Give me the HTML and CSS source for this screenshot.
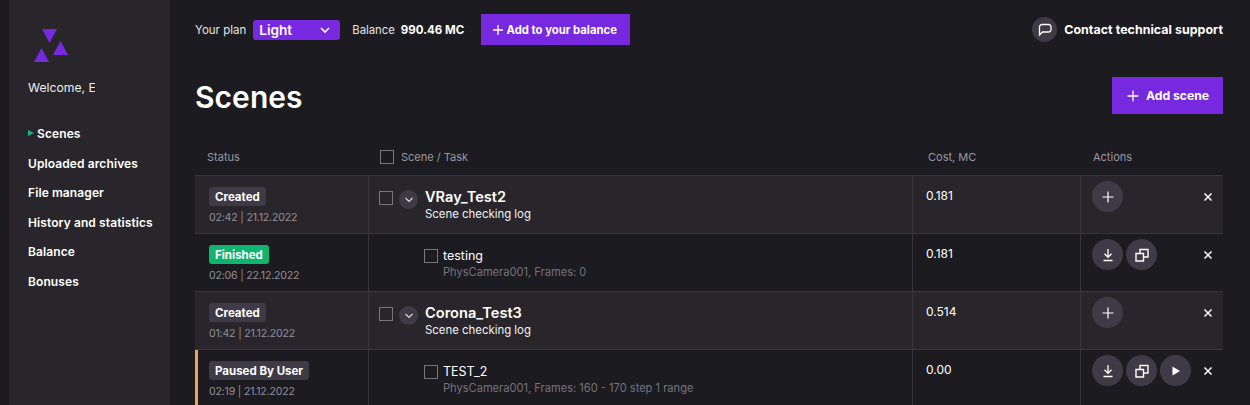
FILE: index.html
```html
<!DOCTYPE html>
<html lang="en">
<head>
<meta charset="utf-8">
<title>Scenes</title>
<link rel="stylesheet" href="styles.css">
</head>
<body>
<div class="app">
  <aside class="sidebar">
    <svg class="logo" width="46" height="34" viewBox="0 0 46 34"><path d="M14 0h15l-7.500 14zM25 26l7.500-14 7.500 14zM6 33l7.500-14 7.500 14z" fill="#7629df"/></svg>
    <div class="welcome">Welcome, E</div>
    <nav class="nav">
      <a class="nav-item active"><span class="nav-mark"></span>Scenes</a>
      <a class="nav-item">Uploaded archives</a>
      <a class="nav-item">File manager</a>
      <a class="nav-item">History and statistics</a>
      <a class="nav-item">Balance</a>
      <a class="nav-item">Bonuses</a>
    </nav>
  </aside>
  <main class="main">
    <header class="topbar">
      <span class="plan-label">Your plan</span>
      <div class="plan-select">Light
        <svg width="12" height="8" viewBox="0 0 12 8"><path d="M2 2l4 4 4-4" fill="none" stroke="#fff" stroke-width="1.600"/></svg>
      </div>
      <span class="balance-label">Balance</span>
      <strong class="balance-value">990.46 MC</strong>
      <button class="add-balance"><svg width="12" height="12" viewBox="0 0 12 12"><path d="M6 1v10M1 6h10" stroke="#fff" stroke-width="1.300"/></svg>Add to your balance</button>
      <div class="support">
        <span class="support-icon"><svg width="14" height="14" viewBox="0 0 14 14"><path d="M4 1.500h6.500a2.500 2.500 0 0 1 2.500 2.500v2.500a2.500 2.500 0 0 1-2.500 2.500H4.500L1.500 12V4A2.500 2.500 0 0 1 4 1.500z" fill="none" stroke="#fff" stroke-width="1.300"/></svg></span>
        <span class="support-text">Contact technical support</span>
      </div>
    </header>
    <div class="title-row">
      <h1>Scenes</h1>
      <button class="add-scene"><svg width="14" height="14" viewBox="0 0 14 14"><path d="M7 1.500v11M1.500 7h11" stroke="#fff" stroke-width="1.300"/></svg>Add scene</button>
    </div>
    <section class="table">
      <div class="row head">
        <div class="cell c-status">Status</div>
        <div class="cell c-scene"><span class="check"></span>Scene / Task</div>
        <div class="cell c-cost">Cost, MC</div>
        <div class="cell c-actions">Actions</div>
      </div>

      <div class="row scene">
        <div class="cell c-status"><span class="badge">Created</span><span class="date">02:42 | 21.12.2022</span></div>
        <div class="cell c-scene">
          <span class="check"></span>
          <span class="toggle"><svg width="10" height="8" viewBox="0 0 10 8"><path d="M1.500 2l3.500 3.500L8.500 2" fill="none" stroke="#fff" stroke-opacity=".8" stroke-width="1.200"/></svg></span>
          <div class="name-block"><div class="scene-name">VRay_Test2</div><div class="scene-sub">Scene checking log</div></div>
        </div>
        <div class="cell c-cost"><span class="cost">0.181</span></div>
        <div class="cell c-actions">
          <button class="round"><svg width="14" height="14" viewBox="0 0 14 14"><path d="M7 1.500v11M1.500 7h11" stroke="#fff" stroke-width="1.200"/></svg></button>
          <svg class="close" width="10" height="10" viewBox="0 0 10 10"><path d="M1.500 1.500l7 7M8.500 1.500l-7 7" stroke="#fff" stroke-width="1.500"/></svg>
        </div>
      </div>

      <div class="row task">
        <div class="cell c-status"><span class="badge green">Finished</span><span class="date">02:06 | 22.12.2022</span></div>
        <div class="cell c-scene task-cell">
          <span class="check"></span>
          <div class="name-block"><div class="task-name">testing</div><div class="task-sub">PhysCamera001, Frames: 0</div></div>
        </div>
        <div class="cell c-cost"><span class="cost">0.181</span></div>
        <div class="cell c-actions">
          <button class="round"><svg width="14" height="14" viewBox="0 0 14 14"><path d="M7 1v8M3.500 5.800L7 9.300l3.500-3.500M2.500 12.500h9" fill="none" stroke="#fff" stroke-width="1.300"/></svg></button>
          <button class="round"><svg width="14" height="14" viewBox="0 0 14 14"><path d="M1 5.500h7.500V13H1zM5 5V1.500h8v7.500H9" fill="none" stroke="#fff" stroke-width="1.400"/></svg></button>
          <svg class="close" width="10" height="10" viewBox="0 0 10 10"><path d="M1.500 1.500l7 7M8.500 1.500l-7 7" stroke="#fff" stroke-width="1.500"/></svg>
        </div>
      </div>

      <div class="row scene">
        <div class="cell c-status"><span class="badge">Created</span><span class="date">01:42 | 21.12.2022</span></div>
        <div class="cell c-scene">
          <span class="check"></span>
          <span class="toggle"><svg width="10" height="8" viewBox="0 0 10 8"><path d="M1.500 2l3.500 3.500L8.500 2" fill="none" stroke="#fff" stroke-opacity=".8" stroke-width="1.200"/></svg></span>
          <div class="name-block"><div class="scene-name">Corona_Test3</div><div class="scene-sub">Scene checking log</div></div>
        </div>
        <div class="cell c-cost"><span class="cost">0.514</span></div>
        <div class="cell c-actions">
          <button class="round"><svg width="14" height="14" viewBox="0 0 14 14"><path d="M7 1.500v11M1.500 7h11" stroke="#fff" stroke-width="1.200"/></svg></button>
          <svg class="close" width="10" height="10" viewBox="0 0 10 10"><path d="M1.500 1.500l7 7M8.500 1.500l-7 7" stroke="#fff" stroke-width="1.500"/></svg>
        </div>
      </div>

      <div class="row task paused">
        <div class="cell c-status"><span class="badge">Paused By User</span><span class="date">02:19 | 21.12.2022</span></div>
        <div class="cell c-scene task-cell">
          <span class="check"></span>
          <div class="name-block"><div class="task-name">TEST_2</div><div class="task-sub">PhysCamera001, Frames: 160 - 170 step 1 range</div></div>
        </div>
        <div class="cell c-cost"><span class="cost">0.00</span></div>
        <div class="cell c-actions">
          <button class="round"><svg width="14" height="14" viewBox="0 0 14 14"><path d="M7 1v8M3.500 5.800L7 9.300l3.500-3.500M2.500 12.500h9" fill="none" stroke="#fff" stroke-width="1.300"/></svg></button>
          <button class="round"><svg width="14" height="14" viewBox="0 0 14 14"><path d="M1 5.500h7.500V13H1zM5 5V1.500h8v7.500H9" fill="none" stroke="#fff" stroke-width="1.400"/></svg></button>
          <button class="round"><svg width="10" height="10" viewBox="0 0 10 10"><path d="M1.500 .5l7.500 4.500-7.500 4.500z" fill="#fff"/></svg></button>
          <svg class="close" width="10" height="10" viewBox="0 0 10 10"><path d="M1.500 1.500l7 7M8.500 1.500l-7 7" stroke="#fff" stroke-width="1.500"/></svg>
        </div>
      </div>
    </section>
  </main>
</div>
</body>
</html>
```
FILE: styles.css
```css
* { box-sizing: border-box; }
html, body { margin: 0; height: 405px; overflow: hidden; }
body {
  background: #1c1b20;
  color: #fff;
  font-family: Inter, "Noto Sans", "Liberation Sans", sans-serif;
  font-size: 12px;
}
.app { display: flex; height: 405px; padding-left: 9px; }
.sidebar {
  width: 161px;
  flex: none;
  background: #28262b;
  padding: 29px 0 0 19px;
}
.logo { display: block; }
.welcome { margin-top: 17px; font-size: 12.2px; line-height: 16px; color: #eee; width: 67px; white-space: nowrap; overflow: hidden; }
.nav { display: flex; flex-direction: column; margin-top: 22.8px; }
.nav-item { display: flex; align-items: center; height: 29.5px; font-size: 12px; font-weight: 600; white-space: nowrap; letter-spacing: .1px; }
.nav-mark { width: 0; height: 0; border-left: 6px solid #1bb76e; border-top: 3px solid transparent; border-bottom: 3px solid transparent; margin-right: 3px; margin-top: -2px; }
.main { flex: 1; min-width: 0; padding: 14px 27px 0 25px; }
.topbar { display: flex; align-items: center; height: 31px; }
.plan-label, .balance-label { font-size: 11.5px; color: #e4e4e6; }
.plan-select {
  width: 87px; height: 20px; margin: 0 0 0 7px; padding: 0 9px 0 6px;
  background: #7629df; border-radius: 3px;
  display: flex; align-items: center; justify-content: space-between;
  font-size: 13.6px; font-weight: 600;
}
.balance-label { margin-left: 12px; font-size: 11.3px; }
.balance-value { margin-left: 6px; font-size: 11.5px; font-weight: 700; }
button { border: 0; color: #fff; font: inherit; cursor: pointer; }
.add-balance {
  display: flex; align-items: center; justify-content: center; gap: 2px;
  width: 149px; height: 31px; margin-left: 17px; padding: 0 7px 0 5px;
  background: #7629df; font-size: 11.3px; font-weight: 700;
}
.support { margin-left: auto; display: flex; align-items: center; gap: 7px; }
.support-icon { width: 25px; height: 25px; border-radius: 50%; background: #3e3b47; display: flex; align-items: center; justify-content: center; }
.support-text { font-size: 12.4px; font-weight: 700; letter-spacing: .05px; }
.title-row { display: flex; justify-content: space-between; align-items: flex-start; margin-top: 32px; height: 63px; }
h1 { margin: 0; font-size: 30px; line-height: 40px; font-weight: 600; letter-spacing: .05px; }
.add-scene {
  display: flex; align-items: center; justify-content: center; gap: 6px;
  width: 111px; height: 37px; background: #7629df; font-size: 12.2px; font-weight: 700;
}
.table { display: flex; flex-direction: column; }
.row { display: grid; grid-template-columns: 173px 544px 168px 143px; height: 58px; border-bottom: 1px solid #37353e; }
.row.head { height: 36px; color: #9a98a0; font-size: 11px; }
.row.head .cell { border-left: 0; display: flex; flex-direction: row; align-items: center; padding-top: 0; padding-bottom: 2px; }
.row.scene { background: #28262b; }
.row.task.paused { height: 55px; border-left: 3px solid #f3a35c; border-bottom: 0; grid-template-columns: 170px 544px 168px 143px; }
.row.task.paused .c-status { padding-left: 11px; }
.cell { padding: 11px 0 0 12px; border-left: 1px solid #37353e; }
.c-status { border-left: 0; padding-left: 14px; display: flex; flex-direction: column; align-items: flex-start; padding-top: 11px; }
.row.head .c-status { padding-left: 12px; }
.row.head .c-scene { padding-left: 12px; gap: 7px; }
.row.head .c-scene .check { margin-top: 0; }
.row.head .c-cost { padding-left: 16px; }
.row.head .c-actions { padding-left: 13px; }
.check { display: block; width: 14px; height: 14px; border: 1.500px solid #78757f; flex: none; }
.badge { display: inline-block; height: 19px; line-height: 20px; padding: 0 6px; border-radius: 3px; background: #3e3b47; font-size: 11.5px; font-weight: 700; white-space: nowrap; }
.badge.green { background: #10b46f; }
.date { margin-top: 5px; font-size: 10.6px; letter-spacing: -.2px; line-height: 14px; color: #928f98; white-space: nowrap; }
.c-scene { display: flex; align-items: flex-start; padding-left: 10px; }
.c-scene .check { margin-top: 4px; }
.task-cell { padding-left: 55px; }
.toggle { width: 19px; height: 19px; border-radius: 50%; background: #3e3b47; display: flex; align-items: center; justify-content: center; margin: 3px 0 0 6px; flex: none; }
.name-block { margin-left: 7px; }
.task-cell .name-block { margin-left: 5px; }
.scene-name { font-size: 14.6px; line-height: 18px; font-weight: 600; margin-top: 1px; }
.scene-sub { font-size: 11.4px; line-height: 14px; margin-top: 1px; color: #f2f2f2; }
.task-name { font-size: 12.5px; line-height: 18px; margin-top: 2px; }
.task-sub { font-size: 11.1px; line-height: 14px; color: #75727c; white-space: nowrap; }
.c-cost { padding-left: 13px; padding-top: 12px; }
.cost { font-size: 12px; line-height: 16px; }
.c-actions { display: flex; align-items: flex-start; gap: 3px; padding-top: 5px; padding-left: 11px; }
.round { width: 31px; height: 31px; border-radius: 50%; background: #3e3b47; padding: 0; display: flex; align-items: center; justify-content: center; }
.close { margin-left: auto; margin-right: 10px; margin-top: 11px; }
```
